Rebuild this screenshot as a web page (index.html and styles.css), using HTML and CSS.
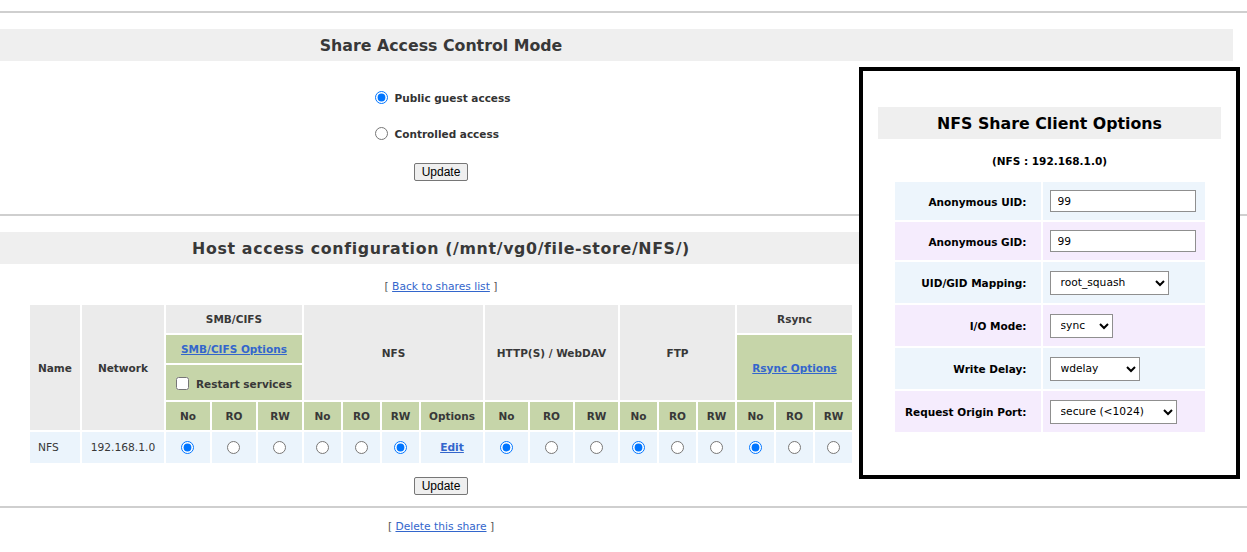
FILE: index.html
```html
<!DOCTYPE html>
<html>
<head>
<meta charset="utf-8">
<title>Share</title>
<link rel="stylesheet" href="styles.css">
</head>
<body>
<div class="rule rule-top"></div>

<section class="block">
  <div class="band"><h2 class="band-title">Share Access Control Mode</h2></div>
  <div class="main main-mode">
    <div class="radios">
      <label class="radio-row"><input type="radio" name="mode" checked><span>Public guest access</span></label>
      <label class="radio-row"><input type="radio" name="mode"><span>Controlled access</span></label>
    </div>
    <div class="btn-row btn-row-mode"><button class="btn" type="button">Update</button></div>
  </div>
</section>

<div class="rule rule-mid"></div>

<section class="block">
  <div class="band"><h2 class="band-title band-title-wide">Host access configuration (/mnt/vg0/file-store/NFS/)</h2></div>
  <div class="main">
    <p class="nav nav-back">[ <a href="#">Back to shares list</a> ]</p>
    <table class="access">
      <colgroup>
        <col class="c-name"><col class="c-net">
        <col class="c-smb"><col class="c-smb"><col class="c-smb">
        <col class="c-nfs"><col class="c-nfs"><col class="c-nfs"><col class="c-opt">
        <col class="c-http"><col class="c-http"><col class="c-http">
        <col class="c-ftp"><col class="c-ftp"><col class="c-ftp">
        <col class="c-rs"><col class="c-rs"><col class="c-rs">
      </colgroup>
      <tr class="r1">
        <th rowspan="4" class="gray">Name</th>
        <th rowspan="4" class="gray">Network</th>
        <th colspan="3" class="gray">SMB/CIFS</th>
        <th colspan="4" rowspan="3" class="gray">NFS</th>
        <th colspan="3" rowspan="3" class="gray">HTTP(S) / WebDAV</th>
        <th colspan="3" rowspan="3" class="gray">FTP</th>
        <th colspan="3" class="gray">Rsync</th>
      </tr>
      <tr class="r2">
        <th colspan="3" class="green"><a href="#">SMB/CIFS Options</a></th>
        <th colspan="3" rowspan="2" class="green"><a href="#">Rsync Options</a></th>
      </tr>
      <tr class="r3">
        <th colspan="3" class="green"><label class="check"><input type="checkbox"><span>Restart services</span></label></th>
      </tr>
      <tr class="r4">
        <th class="green">No</th><th class="green">RO</th><th class="green">RW</th>
        <th class="green">No</th><th class="green">RO</th><th class="green">RW</th><th class="green">Options</th>
        <th class="green">No</th><th class="green">RO</th><th class="green">RW</th>
        <th class="green">No</th><th class="green">RO</th><th class="green">RW</th>
        <th class="green">No</th><th class="green">RO</th><th class="green">RW</th>
      </tr>
      <tr class="data">
        <td class="left">NFS</td>
        <td>192.168.1.0</td>
        <td><input type="radio" name="smb" checked></td><td><input type="radio" name="smb"></td><td><input type="radio" name="smb"></td>
        <td><input type="radio" name="nfs"></td><td><input type="radio" name="nfs"></td><td><input type="radio" name="nfs" checked></td>
        <td><a href="#" class="edit">Edit</a></td>
        <td><input type="radio" name="http" checked></td><td><input type="radio" name="http"></td><td><input type="radio" name="http"></td>
        <td><input type="radio" name="ftp" checked></td><td><input type="radio" name="ftp"></td><td><input type="radio" name="ftp"></td>
        <td><input type="radio" name="rs" checked></td><td><input type="radio" name="rs"></td><td><input type="radio" name="rs"></td>
      </tr>
    </table>
    <div class="btn-row btn-row-table"><button class="btn" type="button">Update</button></div>
  </div>
</section>

<div class="rule rule-bottom"></div>
<div class="main">
  <p class="nav nav-delete">[ <a href="#">Delete this share</a> ]</p>
</div>

<div class="popup">
  <div class="popup-band"><h2 class="popup-title">NFS Share Client Options</h2></div>
  <p class="popup-sub">(NFS : 192.168.1.0)</p>
  <table class="opts">
    <tr class="o-short blue"><th>Anonymous UID:</th><td><input class="txt" type="text" value="99"></td></tr>
    <tr class="o-short lav"><th>Anonymous GID:</th><td><input class="txt" type="text" value="99"></td></tr>
    <tr class="o-tall blue"><th>UID/GID Mapping:</th><td><select class="sel sel-map"><option>root_squash</option></select></td></tr>
    <tr class="o-tall lav"><th>I/O Mode:</th><td><select class="sel sel-io"><option>sync</option></select></td></tr>
    <tr class="o-tall blue"><th>Write Delay:</th><td><select class="sel sel-wd"><option>wdelay</option></select></td></tr>
    <tr class="o-tall lav"><th>Request Origin Port:</th><td><select class="sel sel-port"><option>secure (&lt;1024)</option></select></td></tr>
  </table>
</div>
</body>
</html>
```

FILE: styles.css
```css
html, body {
  margin: 0;
  padding: 0;
  background: #ffffff;
}
body {
  font-family: "DejaVu Sans", Verdana, sans-serif;
  font-size: 10.7px;
  color: #333333;
  width: 1247px;
  height: 552px;
  overflow: hidden;
}

.rule {
  height: 2px;
  background: #cfcfcf;
  width: 1247px;
}
.rule-top { margin-top: 11px; }
.rule-mid { margin-top: 33px; }
.rule-bottom { margin-top: 11px; }

.block { display: block; }

.band {
  margin-top: 16px;
  width: 1233px;
  height: 32px;
  background: #efefef;
  display: flex;
  align-items: center;
}
.band-title {
  margin: 0;
  width: 882px;
  text-align: center;
  font-size: 15.8px;
  font-weight: bold;
  color: #383838;
  line-height: 20px;
  padding-top: 1px;
}
.band-title-wide { letter-spacing: 0.65px; }

.main {
  width: 882px;
  display: flex;
  flex-direction: column;
  align-items: center;
}
.main-mode { padding-top: 26px; }

.radios {
  display: flex;
  flex-direction: column;
  gap: 16px;
}
.radio-row {
  display: flex;
  align-items: center;
  gap: 7px;
  height: 20px;
  font-weight: bold;
  font-size: 10.5px;
  padding-left: 3px;
}
.radio-row span { padding-top: 2px; }
.radio-row input {
  margin: 0;
  width: 13px;
  height: 13px;
}

.btn-row { display: flex; justify-content: center; }
.btn-row-mode { margin-top: 20px; }
.btn-row-table { margin-top: 12px; }

.btn {
  font-family: "Liberation Sans", Arial, sans-serif;
  font-size: 12px;
  line-height: 14px;
  height: 18px;
  padding: 0 7px;
  margin: 0;
  color: #000;
  background: #efefef;
  border: 1px solid #767676;
  border-radius: 2px;
}

.nav {
  margin: 0;
  line-height: 14px;
  text-align: center;
  color: #555;
}
.nav a { color: #3366cc; text-decoration: underline; }
.nav-back { margin-top: 16px; }
.nav-delete { margin-top: 12px; }

.access {
  margin-top: 9px;
  width: 826px;
  table-layout: fixed;
  border-collapse: separate;
  border-spacing: 2px;
}
.c-name { width: 50px; }
.c-net { width: 82px; }
.c-smb { width: 44px; }
.c-nfs { width: 37px; }
.c-opt { width: 62px; }
.c-http { width: 43px; }
.c-ftp { width: 37px; }
.c-rs { width: 37px; }

.access th, .access td {
  padding: 0;
  text-align: center;
  vertical-align: middle;
  font-size: 10.5px;
  color: #383838;
}
.access th { font-weight: bold; }
.access .gray { background: #ebebeb; }
.access .green { background: #c6d5a9; }
.access a { color: #3366cc; text-decoration: underline; font-weight: bold; }
.access .r1 { height: 28px; }
.access .r2 { height: 28px; }
.access .r3 { height: 35px; }
.access .r4 { height: 28px; }
.access .data { height: 31px; }
.access .data td { background: #ebf4fc; font-size: 10.7px; }
.access .data td.left { text-align: left; padding-left: 8px; }
.access input[type="radio"] {
  margin: 0;
  width: 13px;
  height: 13px;
  vertical-align: middle;
}
.check {
  display: inline-flex;
  align-items: center;
  gap: 7px;
  padding-top: 3px;
}
.check input { margin: 0; width: 13px; height: 13px; }
.check span { padding-top: 2px; }

.popup {
  position: absolute;
  left: 859px;
  top: 67px;
  width: 373px;
  height: 404px;
  border: 4px solid #000;
  background: #fff;
  color: #000;
  display: flex;
  flex-direction: column;
  align-items: center;
}
.popup-band {
  margin-top: 36px;
  width: 343px;
  height: 32px;
  background: #efefef;
  display: flex;
  align-items: center;
  justify-content: center;
}
.popup-title {
  margin: 0;
  font-size: 15.8px;
  font-weight: bold;
  line-height: 20px;
  color: #000;
  padding-top: 1px;
}
.popup-sub {
  margin: 15px 0 0 0;
  line-height: 14px;
  font-size: 10.5px;
  font-weight: bold;
}
.opts {
  margin-top: 12px;
  border-collapse: separate;
  border-spacing: 2px;
  table-layout: fixed;
  width: 314px;
}
.opts th {
  width: 132px;
  padding: 1px 14px 0 0;
  text-align: right;
  font-size: 10.5px;
  font-weight: bold;
  color: #000;
  white-space: nowrap;
}
.opts td {
  padding: 0 0 0 7px;
  text-align: left;
}
.opts .o-short { height: 38px; }
.opts .o-tall { height: 41px; }
.opts .blue th, .opts .blue td { background: #edf5fc; }
.opts .lav th, .opts .lav td { background: #f5ecfd; }

.txt {
  box-sizing: border-box;
  width: 146px;
  height: 22px;
  margin: 0;
  padding: 0 7px;
  border: 1px solid #8f8f8f;
  font-family: "DejaVu Sans", Verdana, sans-serif;
  font-size: 10.7px;
  color: #000;
  background: #fff;
}
.sel {
  box-sizing: border-box;
  height: 24px;
  margin: 0;
  padding: 0 0 0 6px;
  border: 1px solid #8f8f8f;
  border-radius: 0;
  font-family: "DejaVu Sans", Verdana, sans-serif;
  font-size: 10.7px;
  color: #000;
  background: #fff;
}
.sel-map { width: 119px; }
.sel-io { width: 63px; }
.sel-wd { width: 90px; }
.sel-port { width: 127px; }
```
